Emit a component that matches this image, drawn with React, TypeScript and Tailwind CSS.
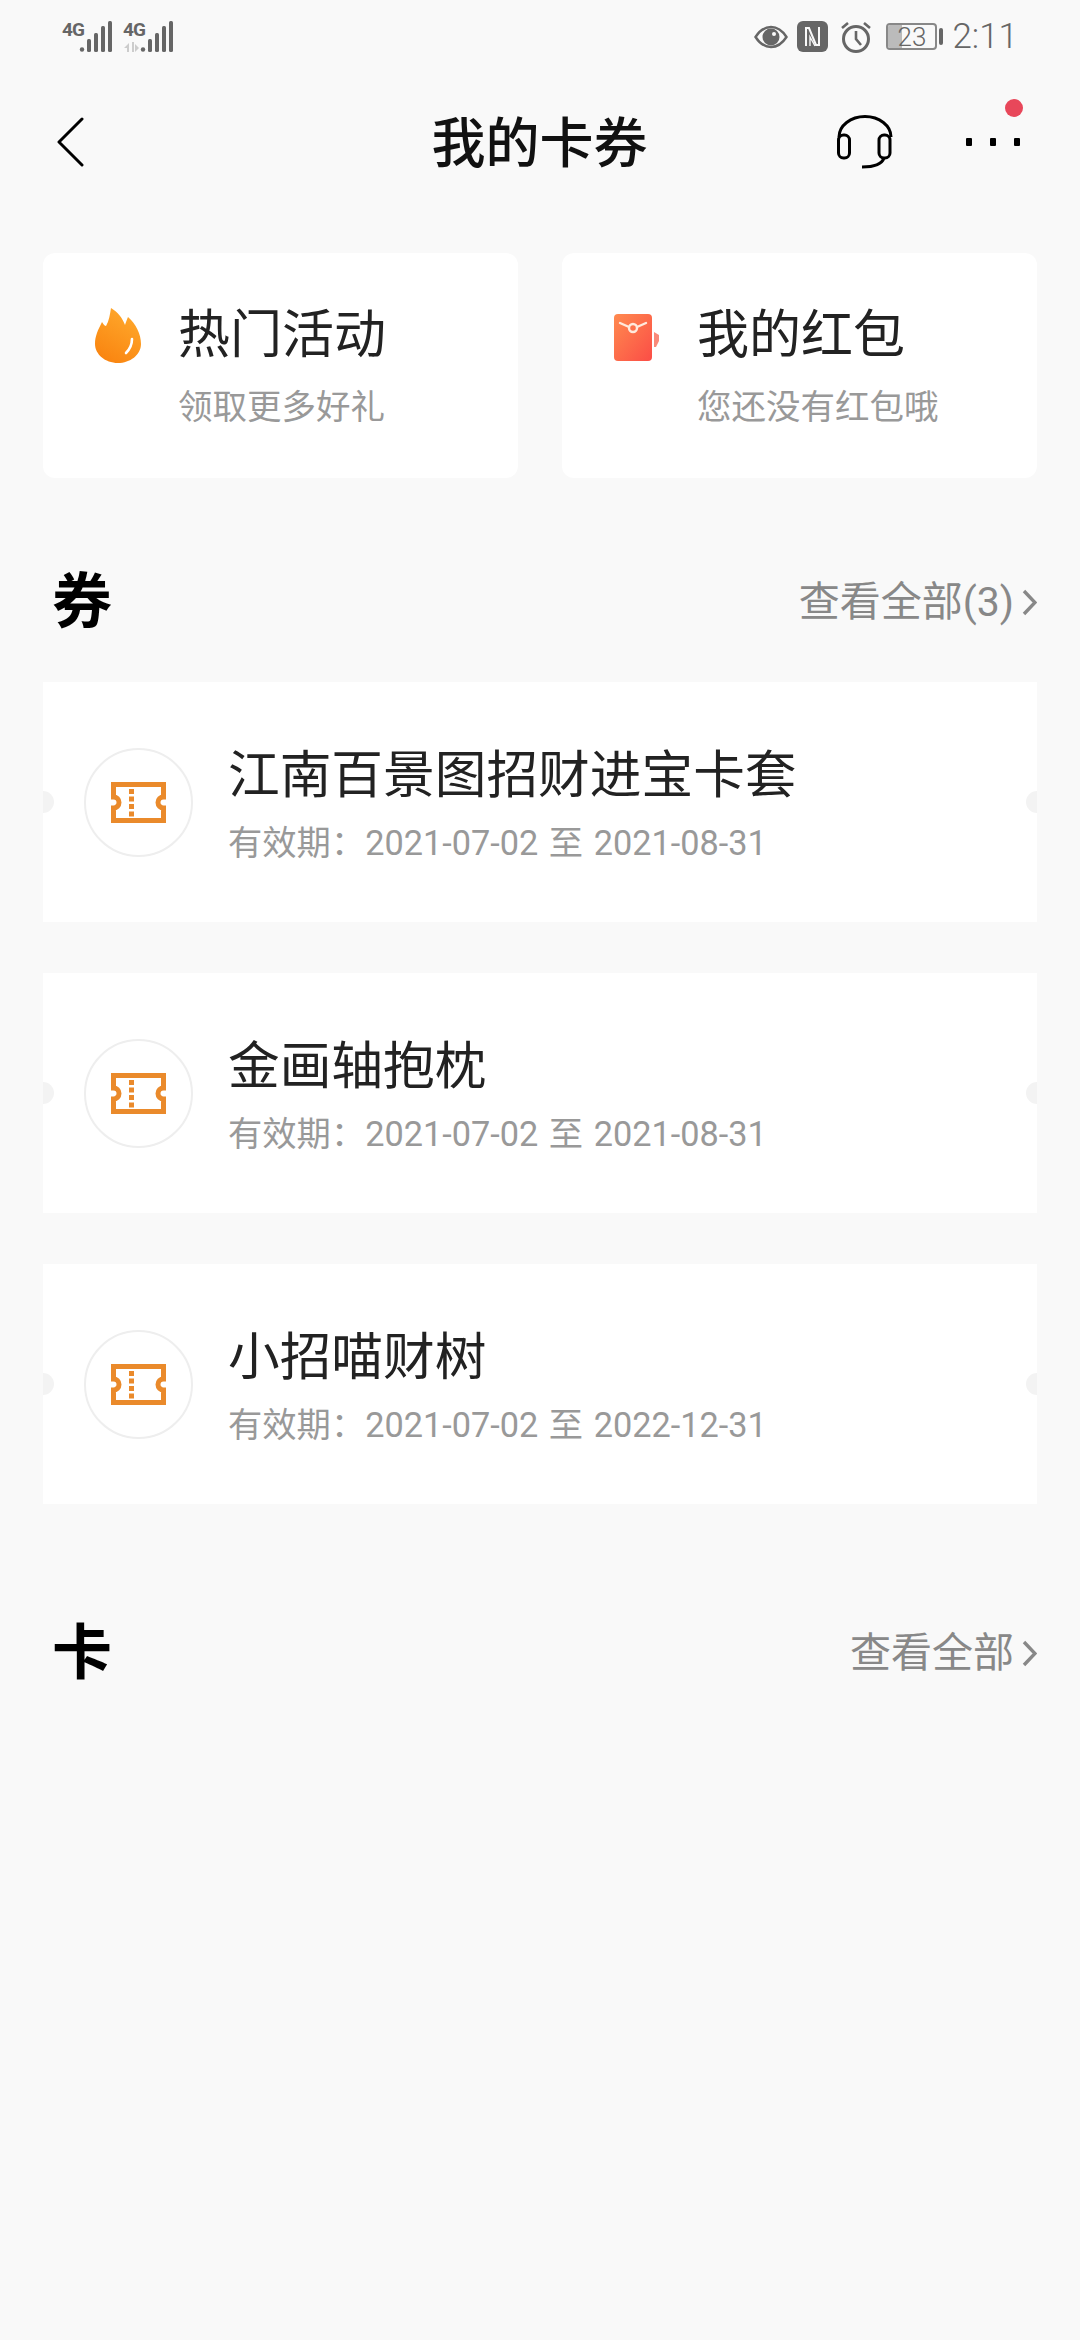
const font = { fontFamily: 'Roboto, "Noto Sans CJK SC", sans-serif' };

function Signal({ sim2 }: { sim2?: boolean }) {
  return (
    <div className="relative w-[52px] h-[34px]">
      <svg className="block" width="52" height="34" viewBox="0 0 52 34">
        {sim2 && <path d="M1 28l5-5v9H4v-4zM9 22h2v10H9zM12 24l4 4-4 4z" fill="#ccc" />}
        <circle cx="20" cy="29.500" r="2.200" fill="#666" />
        <rect x="25" y="19" width="4" height="13" rx="1.500" fill="#666" />
        <rect x="32" y="13" width="4" height="19" rx="1.500" fill="#666" />
        <rect x="39" y="6" width="4" height="26" rx="1.500" fill="#666" />
        <rect x="46" y="1" width="4" height="31" rx="1.500" fill="#666" />
      </svg>
      <span className="absolute left-0 top-0 text-[19px] leading-[19px] font-bold tracking-[-1px] text-[#666] [font-family:'Liberation_Sans_Narrow',Roboto,sans-serif]">4G</span>
    </div>
  );
}

function StatusBar() {
  return (
    <div className="h-[72px] pl-[62px] pr-[62px] flex justify-between items-center">
      <div className="flex gap-[9px] mt-[1px]">
        <Signal />
        <Signal sim2 />
      </div>
      <div className="flex items-center mt-[1px]">
        <svg width="34" height="24" viewBox="0 0 34 24">
          <path d="M1.500 12C6 5 11 2 17 2s11 3 15.500 10C28 19 23 22 17 22S6 19 1.500 12z" fill="none" stroke="#666" strokeWidth="2.400" />
          <circle cx="17" cy="12" r="8.500" fill="#666" />
          <circle cx="20" cy="9" r="2" fill="#f9f9f9" />
        </svg>
        <svg className="ml-[9px]" width="31" height="31" viewBox="0 0 31 31">
          <rect width="31" height="31" rx="6" fill="#666" />
          <path d="M9 25V7h3l7 17h3V6" fill="none" stroke="#f9f9f9" strokeWidth="2" />
          <path d="M13 25V16l5 9" fill="none" stroke="#f9f9f9" strokeWidth="1.400" />
        </svg>
        <svg className="ml-[12px]" width="32" height="32" viewBox="0 0 32 32">
          <circle cx="16" cy="18" r="12.500" fill="none" stroke="#666" strokeWidth="3" />
          <path d="M16 10v8l5 6" fill="none" stroke="#666" strokeWidth="2.600" />
          <path d="M2 7l6-5M30 7l-6-5" fill="none" stroke="#666" strokeWidth="2.600" />
        </svg>
        <div className="relative ml-[14px] w-[51px] h-[27px] border-2 border-[#888] rounded-[4px] overflow-hidden flex items-center justify-center">
          <div className="absolute left-0 top-0 bottom-0 w-[14px] bg-[#bbb]" />
          <span className="relative text-[26px] leading-none text-[#666] font-light">23</span>
        </div>
        <div className="ml-[2px] w-[4px] h-[17px] bg-[#666] rounded-[2px]" />
        <span className="ml-[9px] text-[35px] leading-none text-[#666] font-light">2:11</span>
      </div>
    </div>
  );
}

function Header() {
  return (
    <div className="h-[140px] pl-[57px] pr-[60px] flex items-center">
      <div className="flex-1">
        <svg className="block" width="28" height="50" viewBox="0 0 28 50">
          <path d="M25 2L2 25l23 23" fill="none" stroke="#000" strokeWidth="3" strokeLinecap="round" strokeLinejoin="round" />
        </svg>
      </div>
      <h1 className="text-[54px] leading-none font-medium text-[#111] translate-x-[1px] translate-y-[3px]">我的卡券</h1>
      <div className="flex-1 flex items-center justify-end">
        <svg width="58" height="54" viewBox="0 0 58 54">
          <path d="M3 22a26 20.500 0 0 1 52 0" fill="none" stroke="#000" strokeWidth="3" />
          <rect x="2.500" y="20" width="11" height="23" rx="5" fill="none" stroke="#000" strokeWidth="3" />
          <rect x="43" y="20" width="11" height="23" rx="5" fill="none" stroke="#000" strokeWidth="3" />
          <path d="M48 43c-2 6-9 9-22 9" fill="none" stroke="#000" strokeWidth="3" />
        </svg>
        <div className="relative ml-[72px] flex gap-[18px]">
          <span className="w-[6px] h-[8px] bg-black rounded-[1px]" />
          <span className="w-[6px] h-[8px] bg-black rounded-[1px]" />
          <span className="w-[6px] h-[8px] bg-black rounded-[1px]" />
          <span className="absolute left-[39px] top-[-39px] w-[18px] h-[18px] rounded-full bg-[#e8475a]" />
        </div>
      </div>
    </div>
  );
}

function Flame() {
  return (
    <svg className="block" width="48" height="56" viewBox="0 0 48 56">
      <defs>
        <linearGradient id="flame" x1="0.7" y1="0" x2="0.2" y2="1">
          <stop offset="0" stopColor="#ffa92c" />
          <stop offset="1" stopColor="#f9830f" />
        </linearGradient>
      </defs>
      <path d="M17 1C24 5 29 12 31 18C32 15 33 12 34 10C42 17 47 27 47 37C47 48 36 56 24 56C11 56 1 47 1 37C1 29 4 23 8 15C10 18 11 19 12 19C15 14 16 7 17 1Z" fill="url(#flame)" />
      <path d="M38 32C38 38 35 43 32 46" fill="none" stroke="#fff" strokeWidth="2.600" strokeLinecap="round" />
    </svg>
  );
}

function RedPacket() {
  return (
    <svg className="block" width="47" height="48" viewBox="0 0 47 48">
      <defs>
        <linearGradient id="packet" x1="0" y1="0" x2="1" y2="1">
          <stop offset="0" stopColor="#ff8a4f" />
          <stop offset="1" stopColor="#fb4d46" />
        </linearGradient>
      </defs>
      <rect x="0" y="0" width="38" height="47" rx="4" fill="url(#packet)" />
      <path d="M6 9l9 4M32 9l-9 4" stroke="#ffe9dc" strokeWidth="2.400" strokeLinecap="round" />
      <circle cx="19" cy="14" r="4" fill="none" stroke="#ffe9dc" strokeWidth="2.400" />
      <path d="M40 18l5 3v6l-3 6h-2z" fill="#f98a7a" />
    </svg>
  );
}

function Ticket() {
  return (
    <svg className="block" width="55" height="41" viewBox="0 0 55 41">
      <path d="M2.500 2.500H52.500V15a5.500 5.500 0 0 0 0 11V38.500H2.500V26a5.500 5.500 0 0 0 0-11Z" fill="none" stroke="#ea8a2b" strokeWidth="5" />
      <rect x="18" y="7" width="5" height="5" fill="#ea8a2b" />
      <rect x="18" y="14.500" width="5" height="5" fill="#ea8a2b" />
      <rect x="18" y="22" width="5" height="5" fill="#ea8a2b" />
      <rect x="18" y="29.500" width="5" height="5" fill="#ea8a2b" />
    </svg>
  );
}

function PromoCard({ icon, iconBox, title, sub }: { icon: React.ReactNode; iconBox: string; title: string; sub: string }) {
  return (
    <div className="w-[475px] h-[225px] bg-white rounded-[12px] flex items-start">
      <div className={iconBox}>{icon}</div>
      <div className="pt-[53px]">
        <div className="text-[52px] leading-[60px] text-[#222]">{title}</div>
        <div className="mt-[21px] text-[34.500px] leading-[40px] text-[#999]">{sub}</div>
      </div>
    </div>
  );
}

function SectionHead({ title, more }: { title: string; more: string }) {
  return (
    <div className="h-[80px] pl-[9px] flex items-center justify-between">
      <h2 className="text-[60px] leading-none font-bold text-black translate-y-[3px]">{title}</h2>
      <div className="flex items-center text-[41px] leading-none text-[#888] translate-y-[2px]">
        <span>{more}</span>
        <svg className="ml-[8px]" width="15" height="27" viewBox="0 0 15 27">
          <path d="M2 2l11 11.500L2 25" fill="none" stroke="#888" strokeWidth="3.400" />
        </svg>
      </div>
    </div>
  );
}

function Coupon({ name, date }: { name: string; date: string }) {
  return (
    <div className="relative h-[240px] bg-white flex items-center">
      <span className="absolute left-0 top-[109px] w-[11px] h-[22px] rounded-r-full bg-[#f3f3f3]" />
      <span className="absolute right-0 top-[109px] w-[11px] h-[22px] rounded-l-full bg-[#f3f3f3]" />
      <div className="ml-[41px] w-[109px] h-[109px] rounded-full border-2 border-[#eee] flex items-center justify-center">
        <Ticket />
      </div>
      <div className="ml-[35px] pt-[5px]">
        <div className="text-[51.700px] leading-[60px] text-[#222]">{name}</div>
        <div className="mt-[17px] text-[34.300px] leading-[40px] text-[#999] [word-spacing:2px]">{'有效期\uFF1A'}2021-07-02 至 {date}</div>
      </div>
    </div>
  );
}

export default function App() {
  return (
    <div className="w-[1080px] h-[2340px] bg-[#f9f9f9] overflow-hidden" style={font}>
      <StatusBar />
      <Header />
      <div className="px-[43px] pt-[41px]">
        <div className="flex justify-between">
          <PromoCard icon={<Flame />} iconBox="pl-[51px] pr-[36px] pt-[54px]" title="热门活动" sub="领取更多好礼" />
          <PromoCard icon={<RedPacket />} iconBox="pl-[52px] pr-[36px] pt-[61px]" title="我的红包" sub="您还没有红包哦" />
        </div>
        <div className="mt-[82px]">
          <SectionHead title="券" more="查看全部(3)" />
        </div>
        <div className="mt-[42px] flex flex-col gap-[51px]">
          <Coupon name="江南百景图招财进宝卡套" date="2021-08-31" />
          <Coupon name="金画轴抱枕" date="2021-08-31" />
          <Coupon name="小招喵财树" date="2022-12-31" />
        </div>
        <div className="mt-[107px]">
          <SectionHead title="卡" more="查看全部" />
        </div>
      </div>
    </div>
  );
}
